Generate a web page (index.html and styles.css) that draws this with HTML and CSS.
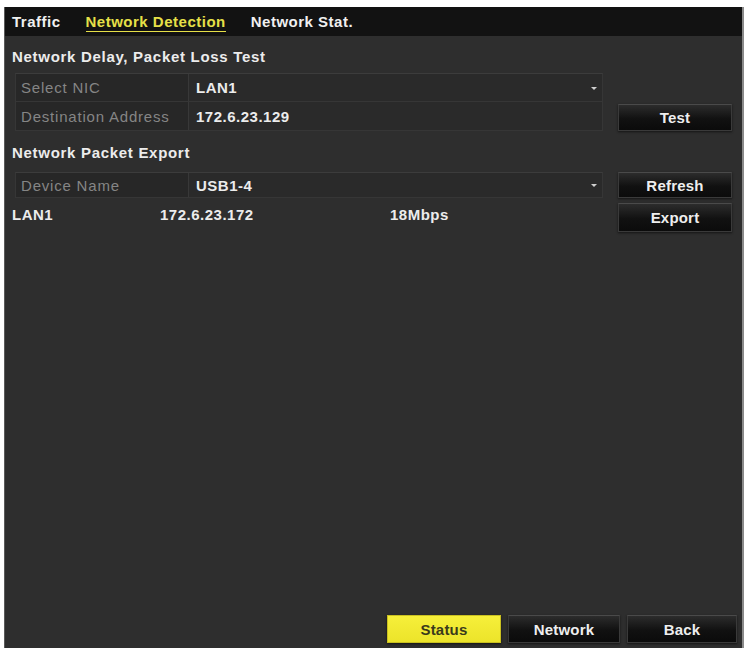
FILE: index.html
```html
<!DOCTYPE html>
<html>
<head>
    <title>Network Detection</title>
    <meta name="viewport" content="width=device-width, initial-scale=1.0">
    <link rel="stylesheet" href="styles.css">
</head>
<body>
    <div class="panel">
        <!-- Tabs -->
        <div class="tabs">
            <span class="tab">Traffic</span>
            <span class="tab active">Network Detection</span>
            <span class="tab">Network Stat.</span>
        </div>

        <div class="content">
            <!-- Delay / packet loss -->
            <div class="heading">Network Delay, Packet Loss Test</div>
            <div class="section">
                <div class="form">
                    <div class="row">
                        <div class="label">Select NIC</div>
                        <div class="value">LAN1<span class="arrow"></span></div>
                    </div>
                    <div class="row">
                        <div class="label">Destination Address</div>
                        <div class="value">172.6.23.129</div>
                    </div>
                </div>
                <div class="actions">
                    <button class="btn">Test</button>
                </div>
            </div>

            <!-- Packet export -->
            <div class="heading second">Network Packet Export</div>
            <div class="section export">
                <div class="form">
                    <div class="row short">
                        <div class="label">Device Name</div>
                        <div class="value">USB1-4<span class="arrow"></span></div>
                    </div>
                    <div class="info">
                        <span class="nic">LAN1</span>
                        <span class="ip">172.6.23.172</span>
                        <span class="speed">18Mbps</span>
                    </div>
                </div>
                <div class="actions col">
                    <button class="btn tight">Refresh</button>
                    <button class="btn tall">Export</button>
                </div>
            </div>
        </div>

        <div class="footer">
            <button class="btn yellow">Status</button>
            <button class="btn w112">Network</button>
            <button class="btn w110">Back</button>
        </div>
    </div>
</body>
</html>
```

FILE: styles.css
```css
html, body {
    margin: 0;
    padding: 0;
    background: #fff;
    overflow: hidden;
}
body {
    font-family: "Liberation Sans", Arial, sans-serif;
    font-size: 15px;
    font-weight: bold;
    letter-spacing: 0.5px;
    color: #ececec;
}
.panel {
    margin: 7px 0 0 4px;
    width: 740px;
    height: 641px;
    box-sizing: border-box;
    background: #2e2e2e;
    border-left: 1px solid #5a5a5a;
    border-right: 2px solid #8a8a8a;
    display: flex;
    flex-direction: column;
}
.tabs {
    height: 29px;
    background: #121212;
    display: flex;
    align-items: center;
    gap: 25px;
    padding-left: 7px;
}
.tab {
    line-height: 20px;
    color: #f0f0f0;
}
.tab.active {
    color: #e6e048;
    border-bottom: 1px solid #e6e048;
    line-height: 18px;
    margin-top: 2px;
}
.content {
    padding-left: 7px;
}
.heading {
    margin-top: 10px;
    height: 22px;
    line-height: 22px;
    letter-spacing: 0.7px;
}
.heading.second {
    margin-top: 11px;
}
.section {
    display: flex;
    margin-top: 5px;
}
.section.export {
    margin-top: 8px;
}
.form {
    width: 588px;
    margin-left: 3px;
}
.row {
    display: flex;
    height: 29px;
    border: 1px solid #363636;
    border-top-color: #3c3c3c;
    box-sizing: border-box;
    background: #292929;
}
.row + .row {
    border-top: none;
}
.row.short {
    height: 26px;
}
.label {
    width: 173px;
    padding-left: 5px;
    box-sizing: border-box;
    color: #858585;
    font-weight: normal;
    letter-spacing: 0.8px;
    background: #272727;
    border-right: 1px solid #383838;
    display: flex;
    align-items: center;
}
.value {
    flex: 1;
    padding-left: 7px;
    display: flex;
    align-items: center;
    position: relative;
    background: #2a2a2a;
}
.arrow {
    position: absolute;
    right: 5px;
    top: 50%;
    margin-top: -1px;
    width: 0;
    height: 0;
    border-left: 3px solid transparent;
    border-right: 3px solid transparent;
    border-top: 3px solid #cfcfcf;
}
.info {
    display: flex;
    height: 32px;
    align-items: center;
    margin-left: -3px;
}
.nic {
    width: 148px;
}
.ip {
    width: 230px;
}
.actions {
    margin-left: 15px;
    display: flex;
    align-items: flex-end;
}
.actions.col {
    flex-direction: column;
    align-items: flex-start;
    gap: 5px;
}
.btn {
    width: 114px;
    height: 27px;
    padding: 0;
    border: 1px solid #3a3a3a;
    border-top-color: #4a4a4a;
    background: linear-gradient(#2c2c2c, #111 55%, #0b0b0b);
    color: #eeeeee;
    font-family: "Liberation Sans", Arial, sans-serif;
    font-size: 15px;
    font-weight: bold;
    letter-spacing: 0.2px;
    box-shadow: 0 1px 2px #151515;
}
.btn.tight {
    height: 26px;
}
.btn.tall {
    height: 29px;
}
.footer {
    margin-top: auto;
    display: flex;
    justify-content: flex-end;
    gap: 7px;
    padding: 0 5px 5px 0;
}
.footer .btn {
    height: 28px;
}
.btn.yellow {
    background: linear-gradient(#f6ef3a, #ece42a);
    border-color: #c9c020;
    color: #3a3a1c;
}
.btn.w112 {
    width: 112px;
}
.btn.w110 {
    width: 110px;
}
```
